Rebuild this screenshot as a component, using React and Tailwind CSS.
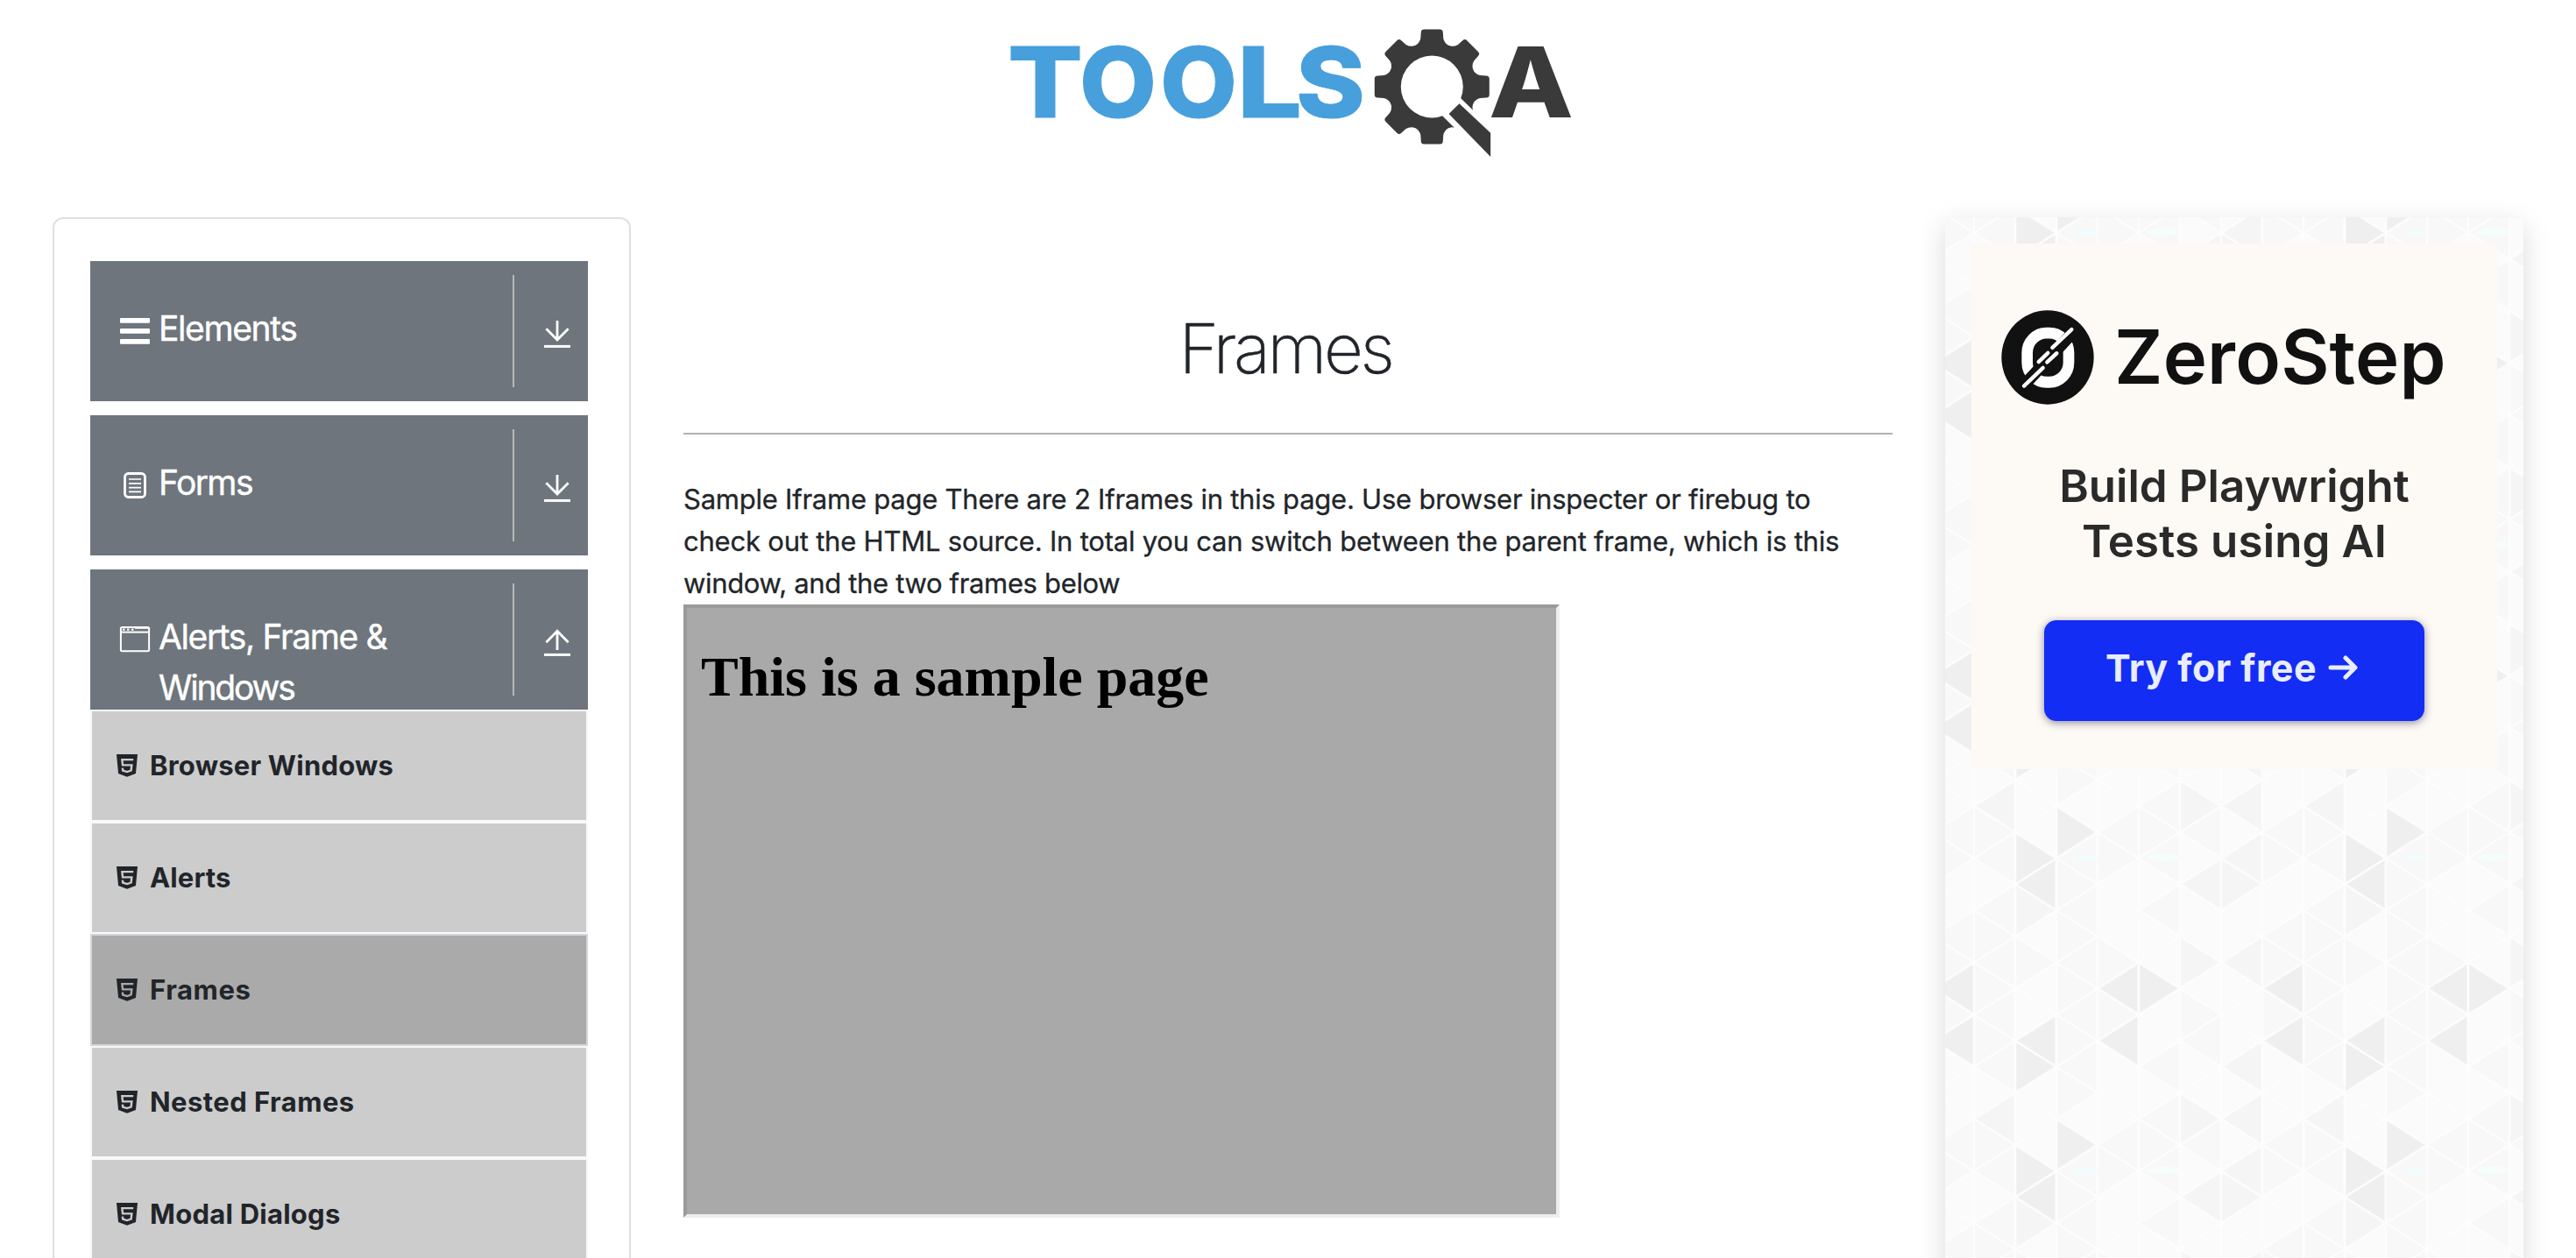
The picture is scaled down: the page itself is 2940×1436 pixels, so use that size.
import React from "react";

const TOOTH =
  "M-12.5 -62Q-12.5 -65.5 -9 -65.5H9Q12.5 -65.5 12.5 -62L13 -55Q14 -50 20 -46H-20Q-14 -50 -13 -55Z";

function Logo() {
  return (
    <svg className="h-[190px] w-[690px]" viewBox="1125 10 690 190">
      <text
        y="133.5"
        fontFamily="Inter, sans-serif"
        fontWeight="800"
        fontSize="111"
        fill="#479fdb"
        stroke="#479fdb"
        strokeWidth="1"
      >
        <tspan x="1150" textLength="86" lengthAdjust="spacingAndGlyphs">T</tspan>
        <tspan x="1232" textLength="88" lengthAdjust="spacingAndGlyphs">O</tspan>
        <tspan x="1324" textLength="88" lengthAdjust="spacingAndGlyphs">O</tspan>
        <tspan x="1412" textLength="74" lengthAdjust="spacingAndGlyphs">L</tspan>
        <tspan x="1479" textLength="79" lengthAdjust="spacingAndGlyphs">S</tspan>
      </text>
      <g fill="#3a3a3a">
        <g transform="translate(1634.3 99)">
          {[0, 45, 90, 135, 180, 225, 270, 315].map((a) => (
            <path key={a} d={TOOTH} transform={`rotate(${a})`} />
          ))}
          <circle r="51" />
          <circle r="35.5" fill="#fff" />
        </g>
        <path d="M1662 107L1692 136.4 1700 190 1674 160 1640 126Z" fill="#fff" />
        <path d="M1665.5 118.3L1701.2 151.7V179L1653.6 130Z" />
        <text
          x="1699"
          y="134"
          textLength="97"
          lengthAdjust="spacingAndGlyphs"
          fontFamily="Inter, sans-serif"
          fontWeight="800"
          fontSize="112"
        >
          A
        </text>
      </g>
    </svg>
  );
}

function BarsIcon() {
  return (
    <svg className="h-9 w-9" viewBox="0 0 36 36" fill="#fff">
      <rect x="1" y="3" width="34" height="5.8" rx="1" />
      <rect x="1" y="15" width="34" height="5.8" rx="1" />
      <rect x="1" y="27" width="34" height="5.8" rx="1" />
    </svg>
  );
}

function FormIcon() {
  return (
    <svg className="h-9 w-9" viewBox="0 0 36 36" fill="none" stroke="#fff">
      <rect x="6.5" y="4.5" width="23" height="27" rx="4" strokeWidth="2.8" />
      <path d="M11 11H25M11 15.8H25M11 20.6H25M11 25.4H25" strokeWidth="1.7" />
    </svg>
  );
}

function WindowIcon() {
  return (
    <svg className="h-9 w-9" viewBox="0 0 36 36" fill="none" stroke="#fff">
      <rect x="1.9" y="4" width="32.2" height="27.2" rx="1.5" strokeWidth="2" />
      <path d="M2 9.6H34" strokeWidth="2" />
      <path d="M4 6.6H6.5M9 6.6H11.5M14 6.6H16.5" strokeWidth="2.2" />
      <path d="M18 5.3H33" strokeWidth="1" />
    </svg>
  );
}

function ArrowIcon({ up }) {
  return (
    <svg className="h-8 w-[30px]" viewBox="0 0 30 32" fill="none" stroke="#fff" strokeWidth="2.8">
      {up ? <path d="M15 1.5V24M2.4 15.2L15 2.2 27.6 15.2" /> : <path d="M15 0V22.5M2.4 9.2L15 22 27.6 9.2" />}
      <path d="M0 29.4H30" strokeWidth="3" />
    </svg>
  );
}

function Html5Icon({ active }) {
  return (
    <svg className="h-[26px] w-6" viewBox="0 0 70 78" preserveAspectRatio="none">
      <path d="M0 0H70L64 66 35 77.5 6 66Z" fill="#212529" />
      <path
        d="M56 18.5H18.5L20.5 37H50.5L48.5 55.5 35 60 21 55.5 20 47"
        fill="none"
        strokeWidth="7"
        className={active ? "stroke-[#aaaaaa]" : "stroke-[#cccccc]"}
      />
    </svg>
  );
}

function Group({ icon, label, up, className }) {
  return (
    <div className="flex h-40 shrink-0 items-center bg-[#6e757c]">
      <div className="flex h-40 w-[482px] pt-12 pl-[33px]">
        <div className="mt-[14px] w-9">{icon}</div>
        <div
          className={`ml-[9px] w-[390px] text-[39px] leading-[58px] text-white [-webkit-text-stroke:0.4px_#fff] ${className}`}
        >
          {label}
        </div>
      </div>
      <div className="flex h-32 w-[86px] items-center border-l-2 border-[#b7b8b9] pl-[34px]">
        <div className="mt-[7px]">
          <ArrowIcon up={up} />
        </div>
      </div>
    </div>
  );
}

const ITEMS = [
  { label: "Browser Windows", cls: "tracking-[0.22px]" },
  { label: "Alerts", cls: "tracking-[0.13px]" },
  { label: "Frames", cls: "tracking-[0.59px]", active: true },
  { label: "Nested Frames", cls: "tracking-[0.45px]" },
  { label: "Modal Dialogs", cls: "tracking-[0.25px]" },
];

function Item({ label, cls, active }) {
  return (
    <li
      className={`flex h-32 shrink-0 items-center border-2 pl-7 ${
        active ? "border-[#d2d7dc] bg-[#aaaaaa]" : "border-[#f8f9fa] bg-[#cccccc]"
      }`}
    >
      <Html5Icon active={active} />
      <span className={`ml-[14px] text-[31px] leading-[48px] font-bold text-[#212529] ${cls}`}>{label}</span>
    </li>
  );
}

/* Shade level of each triangle: 12 half-rows by 8 strips. */
const SHADES = [
  [2, 3, 2, 1, 2, 1, 1, 1],
  [2, 1, 2, 1, 1, 1, 1, 2],
  [2, 2, 2, 2, 1, 3, 3, 2],
  [2, 1, 2, 4, 4, 1, 1, 4],
  [2, 1, 2, 2, 1, 2, 1, 2],
  [2, 4, 2, 4, 1, 2, 1, 4],
  [2, 4, 2, 1, 2, 1, 3, 1],
  [1, 1, 2, 1, 1, 1, 1, 1],
  [3, 1, 1, 1, 2, 3, 3, 1],
  [2, 1, 4, 2, 2, 2, 1, 2],
  [2, 4, 2, 2, 2, 1, 3, 2],
  [1, 4, 2, 1, 1, 3, 3, 1],
];
const FILLS = { 1: "#fbfbfb", 2: "#f8f8f8", 3: "#f5f5f5", 4: "#efefef" };
const SW = 47;
const SH = 29.75;

function Triangle({ row, col, level }) {
  const left = (row + col) % 2 === 0;
  const tip = left ? col * SW : (col + 1) * SW;
  const base = left ? (col + 1) * SW : col * SW;
  const y = row * SH;
  return (
    <path
      d={`M${tip} ${y}L${base} ${y - SH}V${y + SH}Z`}
      fill={FILLS[level]}
      stroke="#fdfdfd"
      strokeWidth="2.6"
      strokeLinejoin="round"
    />
  );
}

function TrianglePattern() {
  return (
    <svg className="absolute inset-0 h-full w-full">
      <defs>
        <pattern id="tri" width="376" height="357" patternUnits="userSpaceOnUse" x="33" y="77.3">
          {SHADES.map((r, row) => r.map((level, col) => <Triangle key={`${row}-${col}`} row={row} col={col} level={level} />))}
          {SHADES[0].map((level, col) => (
            <Triangle key={col} row={12} col={col} level={level} />
          ))}
          <ellipse cx="128" cy="297.5" rx="14" ry="3.5" fill="#f1fdfd" />
          <ellipse cx="216" cy="296.5" rx="19" ry="4.5" fill="#f5fdfd" />
        </pattern>
      </defs>
      <rect width="100%" height="100%" fill="url(#tri)" />
    </svg>
  );
}

function ZeroStepMark() {
  return (
    <svg className="h-[108px] w-[106px]" viewBox="22 34 318 318" preserveAspectRatio="none">
      <ellipse cx="181" cy="193" rx="158" ry="158" fill="#111" />
      <rect x="111" y="111" width="142" height="165" rx="66" fill="none" stroke="#fff" strokeWidth="38" />
      <path d="M84 303L290 86" stroke="#111" strokeWidth="40" />
      <g stroke="#fff" strokeWidth="13" strokeLinecap="round">
        <path d="M100 289L165 228M197 160L263 99" />
        <path d="M150 208L182 178M179 209L212 179" />
      </g>
    </svg>
  );
}

function Ad() {
  return (
    <div className="relative mt-[30px] ml-[30px] flex h-[600px] w-[600px] flex-col items-center bg-[#fdf9f4] pt-[76px]">
      <div className="flex w-full items-start pl-[34px]">
        <ZeroStepMark />
        <span className="ml-[23px] text-[85px] leading-[108px] font-semibold tracking-[0.2px] text-[#111]">ZeroStep</span>
      </div>
      <div className="mt-[61px] text-center text-[51px] leading-[63px] font-semibold text-[#2a2a2a]">
        <div className="tracking-[0.05px]">Build Playwright</div>
        <div className="tracking-[0.15px]">Tests using AI</div>
      </div>
      <div className="mt-[59px] flex h-[115px] w-[434px] items-start rounded-[14px] bg-[#132df4] pt-[24px] pl-[70px] shadow-[0_2px_10px_rgba(30,30,80,0.5)]">
        <span className="text-[43px] leading-[60px] font-bold tracking-[0.45px] text-[#e9edff]">Try for free</span>
        <svg className="mt-4 ml-[13px] h-7 w-[34px]" viewBox="0 0 34 28" fill="none" stroke="#e9edff" strokeWidth="5" strokeLinecap="round" strokeLinejoin="round">
          <path d="M3 14H30M20 3L31 14 20 25" />
        </svg>
      </div>
    </div>
  );
}

export default function App() {
  return (
    <div className="flex h-[1436px] w-[2940px] flex-col overflow-hidden bg-white font-[Inter,sans-serif] text-[#212529]">
      <header className="flex h-[248px] shrink-0 justify-center pt-[10px]">
        <Logo />
      </header>
      <div className="flex min-h-0 flex-1 gap-[60px] px-[60px]">
        <aside className="flex h-[1400px] w-[660px] shrink-0 flex-col rounded-[12px] border-2 border-[#dfdfdf] px-[41px] pt-12">
          <div className="flex w-[568px] flex-col gap-4">
            <Group icon={<BarsIcon />} label="Elements" className="tracking-[-1.4px]" />
            <Group icon={<FormIcon />} label="Forms" className="tracking-[-1.6px]" />
            <Group
              icon={<WindowIcon />}
              label={
                <>
                  Alerts, Frame &amp; <span className="tracking-[-2.2px]">Windows</span>
                </>
              }
              up
              className="tracking-[-1.38px]"
            />
          </div>
          <ul className="flex w-[568px] flex-col">
            {ITEMS.map((it) => (
              <Item key={it.label} {...it} />
            ))}
          </ul>
        </aside>
        <main className="w-[1380px] shrink-0 pt-[102px]">
          <h1 className="h-[144px] pr-1.5 text-center text-[78px] leading-[96px] font-extralight tracking-[-3.4px] [-webkit-text-stroke:0.5px_#212529]">
            Frames
          </h1>
          <hr className="mb-[50px] h-0.5 border-0 bg-[#b0b1b2]" />
          <div className="text-[31px] leading-[48px] [-webkit-text-stroke:0.3px_#212529]">
            <div className="tracking-[-0.236px]">
              Sample Iframe page There are 2 Iframes in this page. Use browser inspecter or firebug to
            </div>
            <div className="tracking-[-0.216px]">
              check out the HTML source. In total you can switch between the parent frame, which is this
            </div>
            <div className="tracking-[-0.34px]">window, and the two frames below</div>
          </div>
          <div className="h-[700px] w-[1000px] border-4 border-t-[#9a9a9a] border-r-[#eeeeee] border-b-[#eeeeee] border-l-[#9a9a9a] bg-[#a9a9a9] pt-[42px] pl-4 font-['Liberation_Serif',serif]">
            <h1 className="text-[64px] leading-[74px] font-bold text-black">This is a sample page</h1>
          </div>
        </main>
        <section className="relative h-[1300px] w-[660px] shrink-0 shadow-[0_10px_30px_rgba(0,0,0,0.15)]">
          <TrianglePattern />
          <Ad />
        </section>
      </div>
    </div>
  );
}
